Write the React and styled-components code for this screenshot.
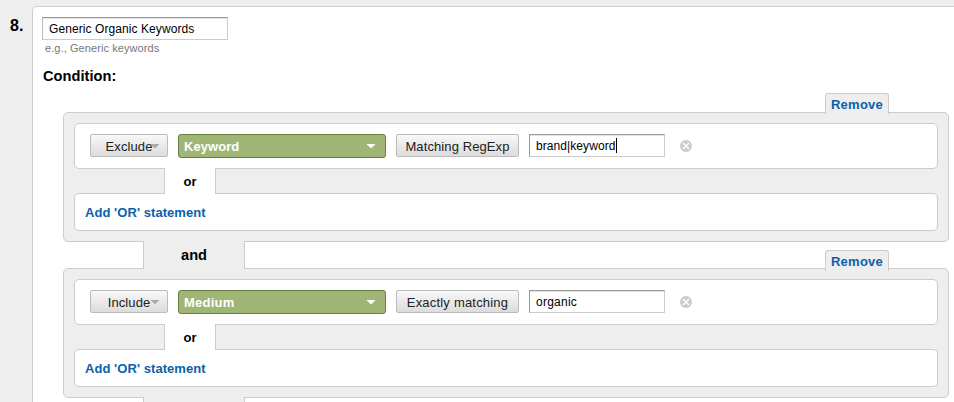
import styled, { createGlobalStyle } from "styled-components";

const GlobalStyle = createGlobalStyle`
  * {
    box-sizing: border-box;
  }
  body {
    margin: 0;
    background: #eee;
    overflow: hidden;
    font-family: "Liberation Sans", Arial, sans-serif;
    color: #000;
  }
`

const Page = styled.div`
  display: flex;
  height: 402px;
  padding-top: 6px;
  overflow: hidden;
`

const StepNumber = styled.div`
  width: 32px;
  flex: none;
  padding: 11px 0 0 10px;
  font-size: 16px;
  line-height: 18px;
  font-weight: bold;
`

const Panel = styled.div`
  flex: none;
  width: 940px;
  height: 420px;
  padding: 10px 0 0 9px;
  background: #fff;
  border: 1px solid #ccc;
  border-radius: 5px;
`

const TextInput = styled.input`
  display: block;
  width: ${(props) => props.$width}px;
  height: 23px;
  margin: 0;
  padding: 0 0 0 6px;
  border: 1px solid #ccc;
  border-top-color: #999;
  border-left-color: ${(props) => (props.$plain ? "#bbb" : "#999")};
  box-shadow: inset 0 1px 0 #e4e4e4;
  border-radius: 0;
  background: #fff;
  font: 12px "Liberation Sans", Arial, sans-serif;
  letter-spacing: ${(props) => props.$spacing || 0}px;
  color: #000;
  outline: none;
`

const Hint = styled.div`
  padding: 2px 0 0 3px;
  font-size: 11px;
  line-height: 13px;
  letter-spacing: 0.08px;
  color: #777;
`

const Title = styled.h2`
  margin: 12px 0 0 1px;
  font-size: 14.6px;
  line-height: 18px;
  letter-spacing: 0.05px;
`

const Groups = styled.div`
  width: 886px;
  margin: 27px 0 0 21px;
`

const Group = styled.div`
  position: relative;
  height: 130px;
  padding: 10px;
  background: #eee;
  border: 1px solid #ccc;
  border-radius: 5px;
`

const RemoveTab = styled.a`
  position: absolute;
  top: ${(props) => props.$top}px;
  right: 59px;
  width: 64px;
  height: 21px;
  background: #eee;
  border: 1px solid #ccc;
  border-bottom: 0;
  border-radius: 3px 3px 0 0;
  text-align: center;
  font-size: 13px;
  line-height: 21px;
  letter-spacing: 0.25px;
  font-weight: bold;
  color: #0b61a9;
`

const Statement = styled.div`
  display: flex;
  align-items: flex-start;
  height: 46px;
  padding: 10px 0 0 15px;
  background: #fff;
  border: 1px solid #ccc;
  border-radius: 5px;
`

const AddStatement = styled.a`
  display: block;
  height: 38px;
  padding-left: 10px;
  background: #fff;
  border: 1px solid #ccc;
  border-radius: 5px;
  font-size: 13px;
  line-height: 38px;
  letter-spacing: 0.06px;
  font-weight: bold;
  color: #0b61a9;
`

const OrLink = styled.div`
  position: relative;
  width: 52px;
  height: 26px;
  margin: -1px 0 -1px 90px;
  background: #fff;
  border: solid #ccc;
  border-width: 0 1px;
  text-align: center;
  font-size: 13px;
  line-height: 28px;
  font-weight: bold;
`

const AndLink = styled.div`
  position: relative;
  z-index: 1;
  width: 102px;
  height: 28px;
  margin: -1px 0 -1px 80px;
  background: #eee;
  border: solid #ccc;
  border-width: 0 1px;
  text-align: center;
  font-size: 14.6px;
  line-height: 28px;
  font-weight: bold;
`

const Button = styled.button`
  display: flex;
  align-items: center;
  justify-content: center;
  width: ${(props) => props.$width}px;
  height: 23px;
  padding: 1px 0 0;
  border: 1px solid #bbb;
  border-radius: 2px;
  background: linear-gradient(#f8f8f8, #dcdcdc);
  font: 13px "Liberation Sans", Arial, sans-serif;
  letter-spacing: ${(props) => props.$spacing || 0}px;
  color: #222;
`

const ModeButton = styled(Button)`
  position: relative;
  margin-right: 10px;

  svg {
    position: absolute;
    right: 8.5px;
    top: 9px;
  }
`

const MetricSelect = styled.div`
  display: flex;
  align-items: center;
  justify-content: space-between;
  width: 208px;
  height: 24px;
  margin-right: 10px;
  padding: 0 10px 0 5px;
  background: #9fb677;
  border: 1px solid #687f42;
  border-radius: 3px;
  font-size: 13px;
  letter-spacing: ${(props) => props.$spacing}px;
  font-weight: bold;
  color: #fff;
`

const MatchButton = styled(Button)`
  margin-right: 10px;
`

const ValueField = styled.div`
  position: relative;
`

const Caret = styled.span`
  position: absolute;
  left: 87px;
  top: 4px;
  width: 1px;
  height: 15px;
  background: #000;
`

const Clear = styled.svg`
  margin: 6px 0 0 15px;
`

function Arrow({ color }) {
  return (
    <svg width="8" height="4" viewBox="0 0 8 4">
      <path d="M0 0H8V.5L4.5 4H3.5L0 .5Z" fill={color} />
    </svg>
  )
}

function ClearIcon() {
  return (
    <Clear width="12" height="12" viewBox="0 0 12 12">
      <circle cx="6" cy="6" r="6" fill="#ccc" />
      <path d="M3.1 3.1L8.9 8.9M8.9 3.1L3.1 8.9" stroke="#fff" strokeWidth="1.4" />
    </Clear>
  )
}

const conditions = [
  {
    mode: "Exclude",
    metric: "Keyword",
    metricSpacing: 0.05,
    match: "Matching RegExp",
    matchSpacing: 0.1,
    value: "brand|keyword",
    valueSpacing: 0.08,
    focused: true,
    tabTop: -20,
  },
  {
    mode: "Include",
    metric: "Medium",
    metricSpacing: 0.25,
    match: "Exactly matching",
    matchSpacing: 0.2,
    value: "organic",
    valueSpacing: 0.25,
    focused: false,
    tabTop: -19,
  },
]

function ConditionGroup({ condition }) {
  return (
    <Group>
      <RemoveTab $top={condition.tabTop}>Remove</RemoveTab>
      <Statement>
        <ModeButton $width={78} $spacing={0.1}>
          {condition.mode}
          <Arrow color="#aaa" />
        </ModeButton>
        <MetricSelect $spacing={condition.metricSpacing}>
          {condition.metric}
          <Arrow color="#fff" />
        </MetricSelect>
        <MatchButton $width={123} $spacing={condition.matchSpacing}>{condition.match}</MatchButton>
        <ValueField>
          <TextInput $width={136} $spacing={condition.valueSpacing} defaultValue={condition.value} />
          {condition.focused && <Caret />}
        </ValueField>
        <ClearIcon />
      </Statement>
      <OrLink>or</OrLink>
      <AddStatement>Add 'OR' statement</AddStatement>
    </Group>
  )
}

function App() {
  return (
    <Page>
      <GlobalStyle />
      <StepNumber>8.</StepNumber>
      <Panel>
        <TextInput $width={186} $plain $spacing={0.08} defaultValue="Generic Organic Keywords" />
        <Hint>e.g., Generic keywords</Hint>
        <Title>Condition:</Title>
        <Groups>
          <ConditionGroup condition={conditions[0]} />
          <AndLink>and</AndLink>
          <ConditionGroup condition={conditions[1]} />
          <AndLink />
        </Groups>
      </Panel>
    </Page>
  )
}

export default App;
